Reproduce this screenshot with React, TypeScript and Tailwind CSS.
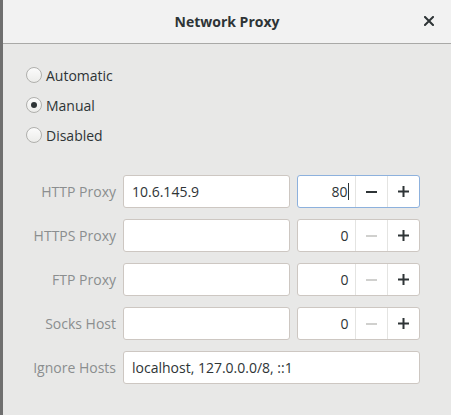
import { useState } from 'react';

const ROWS = [
  { label: 'HTTP Proxy', host: '10.6.145.9', port: 80, focused: true },
  { label: 'HTTPS Proxy', host: '', port: 0, focused: false },
  { label: 'FTP Proxy', host: '', port: 0, focused: false },
  { label: 'Socks Host', host: '', port: 0, focused: false },
];

const MODES = ['Automatic', 'Manual', 'Disabled'];

export default function App() {
  const [mode, setMode] = useState('Manual');

  return (
    <div className="flex w-[451px] h-[415px] overflow-hidden font-['Open_Sans',sans-serif] text-[14px] text-[#2e3436]">
      <div className="w-[3px] shrink-0 bg-[#6f6f6f]" />
      <div className="flex-1 flex flex-col bg-[#e8e8e7]">
        <div className="relative h-[44px] shrink-0 flex items-center justify-center bg-[#f2f2f2] border-b border-[#a9a9a7]">
          <span className="font-bold text-[#2e3436] text-[14px]">Network Proxy</span>
          <button className="absolute right-[12px] top-[11px] w-[20px] h-[20px] flex items-center justify-center">
            <svg width="10" height="10" viewBox="0 0 10 10">
              <path d="M1 1 L9 9 M9 1 L1 9" stroke="#2e3436" strokeWidth="2" strokeLinecap="square" />
            </svg>
          </button>
        </div>

        <div className="flex flex-col pt-[16px] pl-[23px]">
          {MODES.map((m) => (
            <label key={m} className="flex items-center h-[30px] gap-[4px] cursor-default" onClick={() => setMode(m)}>
              <span className="w-[16px] h-[16px] rounded-full border border-[#b0b0ad] bg-gradient-to-b from-[#fbfbfb] to-[#ececea] flex items-center justify-center">
                {mode === m && <span className="w-[6px] h-[6px] rounded-full bg-[#2e3436]" />}
              </span>
              <span>{m}</span>
            </label>
          ))}
        </div>

        <div className="flex flex-col gap-[11px] mt-[25px]">
          {ROWS.map((r) => (
            <div key={r.label} className="flex items-center h-[33px] gap-[7px]">
              <span className="w-[113px] text-right text-[#8b8e8f]">{r.label}</span>
              <div className="w-[167px] h-[33px] rounded-[3px] border border-[#cdc7c2] bg-white flex items-center px-[8px]">
                {r.host}
              </div>
              <div
                className={`w-[123px] h-[33px] rounded-[3px] border bg-white flex ${
                  r.focused ? 'border-[#8db1dd]' : 'border-[#cdc7c2]'
                }`}
              >
                <div className="w-[57px] flex items-center justify-end pr-[6px]">
                  {r.port}
                  {r.focused && <span className="w-[1px] h-[17px] bg-[#2e3436]" />}
                </div>
                <div className="w-[33px] flex items-center justify-center border-l border-[#e4e4e2]">
                  <svg width="11" height="2" viewBox="0 0 11 2">
                    <rect width="11" height="2" fill={r.port > 0 ? '#2e3436' : '#d0d0ce'} />
                  </svg>
                </div>
                <div className="w-[32px] flex items-center justify-center border-l border-[#e4e4e2]">
                  <svg width="11" height="11" viewBox="0 0 11 11">
                    <rect y="4.5" width="11" height="2" fill="#2e3436" />
                    <rect x="4.5" width="2" height="11" fill="#2e3436" />
                  </svg>
                </div>
              </div>
            </div>
          ))}
          <div className="flex items-center h-[33px] gap-[7px]">
            <span className="w-[113px] text-right text-[#8b8e8f]">Ignore Hosts</span>
            <div className="w-[297px] h-[33px] rounded-[3px] border border-[#cdc7c2] bg-white flex items-center px-[8px]">
              localhost, 127.0.0.0/8, ::1
            </div>
          </div>
        </div>
      </div>
    </div>
  );
}
